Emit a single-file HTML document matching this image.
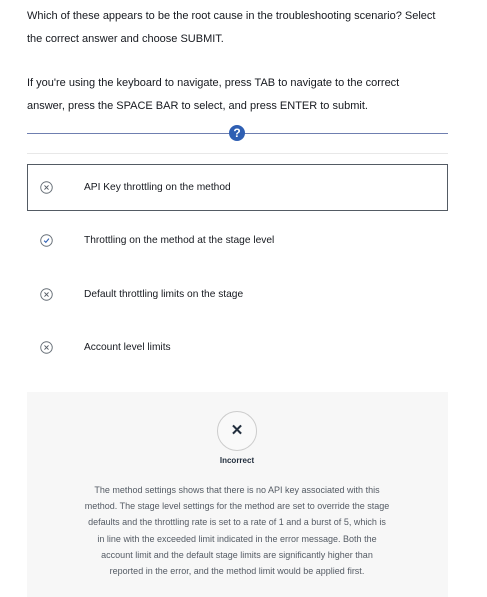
<!DOCTYPE html><html><head><style>
body{margin:0;width:487px;height:597px;background:#fff;font-family:"Liberation Sans",sans-serif;color:#16191f;position:relative;overflow:hidden}
.t{position:absolute;left:27px;font-size:11px;line-height:23px}
.opt{position:absolute;left:84px;font-size:10.2px}
.ic{position:absolute;left:40px;width:13px;height:13px}
</style></head><body>
<div class="t" style="top:5px;width:425px">Which of these appears to be the root cause in the troubleshooting scenario? Select the correct answer and choose SUBMIT.</div>
<div class="t" style="top:72px;width:400px">If you're using the keyboard to navigate, press TAB to navigate to the correct answer, press the SPACE BAR to select, and press ENTER to submit.</div>
<div style="position:absolute;left:27px;top:133px;width:421px;height:1px;background:#6f7fb0"></div>
<div style="position:absolute;left:229px;top:125px;width:16px;height:16px;border-radius:50%;background:#2f5fb3;color:#fff;font-weight:bold;font-size:12px;text-align:center;line-height:16px">?</div>
<div style="position:absolute;left:27px;top:153px;width:421px;height:1px;background:#e8e8e8"></div>
<div style="position:absolute;left:27px;top:164px;width:419px;height:45px;border:1px solid #545b64"></div>
<svg class="ic" style="top:181px" viewBox="0 0 14 14"><circle cx="7" cy="7" r="6.2" fill="none" stroke="#687078" stroke-width="1"/><path d="M4.8 4.8L9.2 9.2M9.2 4.8L4.8 9.2" stroke="#545b64" stroke-width="1"/></svg>
<div class="opt" style="top:182px">API Key throttling on the method</div>
<svg class="ic" style="top:234px" viewBox="0 0 14 14"><circle cx="7" cy="7" r="6.2" fill="none" stroke="#687078" stroke-width="1"/><path d="M4.5 7.2L6.3 9L9.6 5" fill="none" stroke="#2f5fb3" stroke-width="1.2"/></svg>
<div class="opt" style="top:235px">Throttling on the method at the stage level</div>
<svg class="ic" style="top:288px" viewBox="0 0 14 14"><circle cx="7" cy="7" r="6.2" fill="none" stroke="#687078" stroke-width="1"/><path d="M4.8 4.8L9.2 9.2M9.2 4.8L4.8 9.2" stroke="#545b64" stroke-width="1"/></svg>
<div class="opt" style="top:289px">Default throttling limits on the stage</div>
<svg class="ic" style="top:341px" viewBox="0 0 14 14"><circle cx="7" cy="7" r="6.2" fill="none" stroke="#687078" stroke-width="1"/><path d="M4.8 4.8L9.2 9.2M9.2 4.8L4.8 9.2" stroke="#545b64" stroke-width="1"/></svg>
<div class="opt" style="top:342px">Account level limits</div>
<div style="position:absolute;left:27px;top:392px;width:421px;height:205px;background:#f7f7f7"></div>
<div style="position:absolute;left:217px;top:411px;width:38px;height:38px;border-radius:50%;border:1px solid #ccc;background:#f9f9f9;text-align:center;line-height:38px;font-size:15px;font-weight:bold;color:#232f3e">✕</div>
<div style="position:absolute;left:0;width:474px;top:456px;text-align:center;font-size:8px;font-weight:bold;color:#232f3e">Incorrect</div>
<div style="position:absolute;left:37px;width:400px;top:482px;text-align:center;font-size:9px;line-height:16.2px;color:#545b64;white-space:nowrap">The method settings shows that there is no API key associated with this<br>method. The stage level settings for the method are set to override the stage<br>defaults and the throttling rate is set to a rate of 1 and a burst of 5, which is<br>in line with the exceeded limit indicated in the error message. Both the<br>account limit and the default stage limits are significantly higher than<br>reported in the error, and the method limit would be applied first.</div>
</body></html>
